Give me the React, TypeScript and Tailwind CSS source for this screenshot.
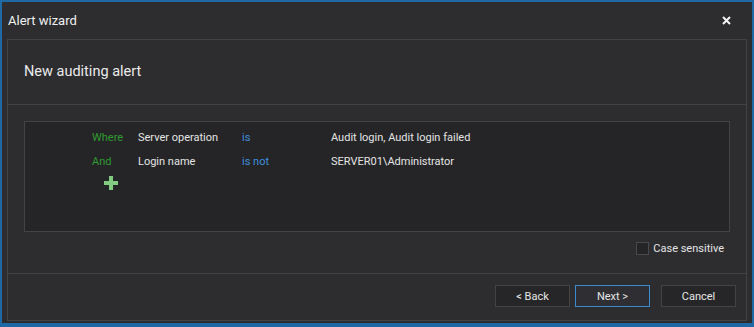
import React from "react";

const font = { fontFamily: 'Roboto, Lato, "Noto Sans", sans-serif' };

function Row({ a, b, c, d }: { a: string; b: string; c: string; d: string }) {
  return (
    <div className="flex h-[24px] items-center text-[11px] leading-none">
      <div className="w-[46px] text-[#2f9a2f]">{a}</div>
      <div className="w-[104px] text-[#e4e4e4]">{b}</div>
      <div className="w-[89px] text-[#3d8fdc]">{c}</div>
      <div className="text-[#e4e4e4]">{d}</div>
    </div>
  );
}

export default function App() {
  return (
    <div
      className="w-[754px] h-[327px] flex flex-col bg-[#2d2d30] border-t-2 border-x-2 border-b-4 border-[#1f6aa5] overflow-hidden"
      style={font}
    >
      {/* title bar */}
      <div className="h-[37px] shrink-0 flex items-center justify-between pl-[6px] pr-[21px]">
        <span className="text-[13px] text-[#f1f1f1] leading-none">Alert wizard</span>
        <svg width="9" height="9" viewBox="0 0 9 9">
          <path d="M1 1L8 8M8 1L1 8" stroke="#f4f4f4" strokeWidth="2" />
        </svg>
      </div>
      {/* panel */}
      <div className="ml-[5px] mr-[5px] mb-[2px] flex-1 flex flex-col border border-[#434346]">
        <div className="h-[65px] shrink-0 flex items-center pl-[16px] border-b border-[#434346]">
          <span className="text-[14.5px] text-[#eaeaea] leading-none">New auditing alert</span>
        </div>
        <div className="flex-1 flex flex-col pt-[16px] pl-[16px] pr-[16px] border-b border-[#434346]">
          <div className="h-[111px] bg-[#252527] border border-[#434346] pl-[67px] pt-[3px]">
            <Row a="Where" b="Server operation" c="is" d="Audit login, Audit login failed" />
            <Row a="And" b="Login name" c="is not" d={"SERVER01\\Administrator"} />
            <div className="h-[16px] flex items-center pl-[12px] mt-[2px]">
              <svg width="14" height="14" viewBox="0 0 14 14">
                <path d="M5 0H9V5H14V9H9V14H5V9H0V5H5Z" fill="#82cc82" />
              </svg>
            </div>
          </div>
          <div className="flex justify-end items-center mt-[10px] pr-[6px] gap-[4px]">
            <div className="w-[13px] h-[13px] bg-[#252527] border border-[#4a4a4e]" />
            <span className="text-[11px] text-[#e4e4e4] leading-none">Case sensitive</span>
          </div>
        </div>
        <div className="h-[46px] shrink-0 flex items-center justify-end pr-[10px] pb-[2px]">
          <button className="w-[75px] h-[22px] bg-[#262628] border border-[#434346] text-[11px] text-[#e6e6e6] leading-none">
            &lt; Back
          </button>
          <button className="ml-[5px] w-[75px] h-[22px] bg-[#2f2f33] border border-[#3a8ad0] text-[11px] text-[#e6e6e6] leading-none">
            Next &gt;
          </button>
          <button className="ml-[11px] w-[75px] h-[22px] bg-[#262628] border border-[#434346] text-[11px] text-[#e6e6e6] leading-none">
            Cancel
          </button>
        </div>
      </div>
    </div>
  );
}
